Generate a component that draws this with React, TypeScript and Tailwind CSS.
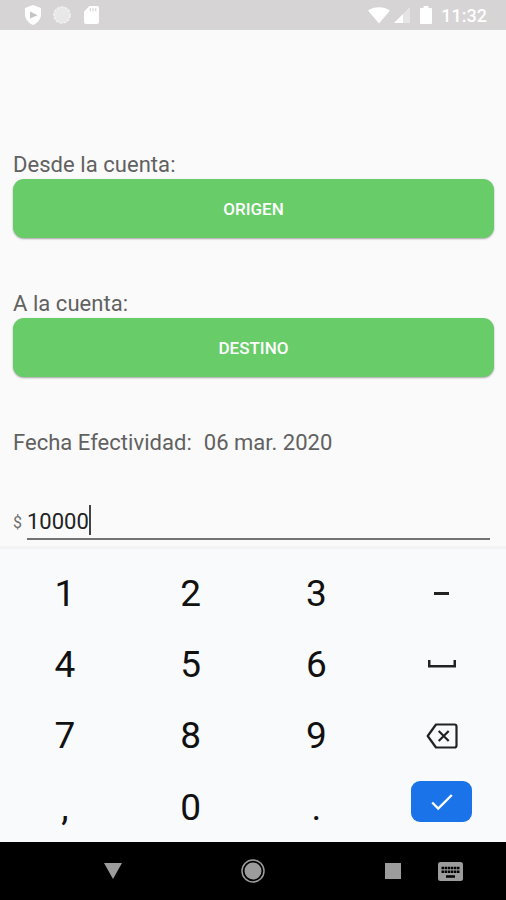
import { useState } from "react";

const rows = [
  ["1", "2", "3", "-"],
  ["4", "5", "6", "space"],
  ["7", "8", "9", "del"],
  [",", "0", ".", "ok"],
];

function StatusBar() {
  return (
    <div className="flex h-[30px] shrink-0 items-center justify-between bg-[#d6d4d5] pr-[19px] pl-6 text-white">
      <div className="flex items-center">
        <svg width="18" height="20" viewBox="0 0 18 20">
          <path d="M9 0 17 3v6.500c0 4.600-3.500 8.600-8 10.500-4.500-1.900-8-5.900-8-10.500V3z" fill="white" />
          <path d="m6 6.500 7.500 3.700L6 13.500z" fill="#c6c4c5" />
        </svg>
        <svg className="ml-[11px]" width="18" height="18" viewBox="0 0 18 18">
          <circle cx="9" cy="9" r="8" fill="#e9e8e8" stroke="#f3f2f2" strokeWidth="1.500" strokeDasharray="3 1" />
        </svg>
        <svg className="ml-[13px]" width="16" height="20" viewBox="0 0 16 20">
          <path d="M5.500 1H13a2 2 0 0 1 2 2v14a2 2 0 0 1-2 2H2a2 2 0 0 1-2-2V6.500z" fill="white" />
          <path d="M6.300 3.300v3M9 3.300v3M11.700 3.300v3" stroke="#d6d4d5" strokeWidth="1.200" />
        </svg>
      </div>
      <div className="flex items-center">
        <svg width="22" height="18" viewBox="0 0 22 18">
          <path d="M0 4.500C6 0 16 0 22 4.500L11 17.500z" fill="white" />
        </svg>
        <svg className="ml-[3px]" width="18" height="18" viewBox="0 0 18 18">
          <path d="M17 1v16H1z" fill="#e6e5e5" />
          <path d="M10 8v9H1z" fill="white" />
        </svg>
        <svg className="ml-[9px]" width="12" height="20" viewBox="0 0 12 20">
          <path d="M3.500 1h5v2H11a1 1 0 0 1 1 1v14a1 1 0 0 1-1 1H1a1 1 0 0 1-1-1V4a1 1 0 0 1 1-1h2.500z" fill="white" />
        </svg>
        <span className="ml-[9px] pt-px text-[18px] leading-[30px] font-medium">11:32</span>
      </div>
    </div>
  );
}

function KeyLabel({ value }: { value: string }) {
  if (value === "-") {
    return <span className="mb-px h-[3px] w-[15px] bg-[#222]" />;
  }
  if (value === "space") {
    return (
      <svg className="mb-[2px]" width="28" height="8" viewBox="0 0 28 8">
        <path d="M1.250 0v6.200h25.500V0" fill="none" stroke="#222" strokeWidth="2.500" />
      </svg>
    );
  }
  if (value === "del") {
    return (
      <svg width="32" height="26" viewBox="0 0 32 26" fill="none" stroke="#222" strokeWidth="2.200">
        <path d="M10 1.500h18.500a2 2 0 0 1 2 2v19a2 2 0 0 1-2 2H10L1.700 13z" strokeLinejoin="round" />
        <path d="m12.700 8 10 10M22.700 8l-10 10" />
      </svg>
    );
  }
  if (value === "ok") {
    return (
      <span className="mb-[11px] flex h-[41px] w-[61px] items-center justify-center rounded-[9px] bg-[#1a73e8]">
        <svg width="22" height="18" viewBox="0 0 22 18">
          <path d="m1.200 9.500 6 6L20.800 2" fill="none" stroke="white" strokeWidth="2.400" />
        </svg>
      </span>
    );
  }
  return <span className="pl-px text-[37px] leading-none">{value}</span>;
}

function AccountField({ label, button }: { label: string; button: string }) {
  return (
    <div>
      <p className="pt-px text-[22px] leading-[29px] tracking-[0.05px] text-[#616161]">{label}</p>
      <button className="block h-[59px] w-full rounded-[11px] bg-[#68cc68] pt-[3px] text-[17px] font-medium text-white shadow-[0_1px_2px_rgba(0,0,0,0.35)]">
        {button}
      </button>
    </div>
  );
}

export default function App() {
  const [amount, setAmount] = useState("10000");

  const press = (key: string) => {
    if (key === "del") return setAmount(amount.slice(0, -1));
    if (key === "ok" || key === "space") return;
    setAmount(amount + key);
  };

  return (
    <div className="flex h-[900px] w-[506px] flex-col overflow-hidden bg-[#fafafa] font-[Roboto,sans-serif]">
      <StatusBar />

      {/* FORM */}
      <div className="flex h-[516px] shrink-0 flex-col pt-[119px] pr-3 pl-[13px]">
        <div className="flex flex-col gap-[50px]">
          <AccountField label="Desde la cuenta:" button="ORIGEN" />
          <AccountField label="A la cuenta:" button="DESTINO" />
        </div>

        <div className="mt-[51px] flex gap-3 text-[22px] leading-[30px] tracking-[0.03px] text-[#616161]">
          <span>Fecha Efectividad:</span>
          <span>06 mar. 2020</span>
        </div>

        <div className="mt-[46px] flex">
          <span className="w-[14px] pt-px text-[16px] leading-[36px] text-[#707070]">$</span>
          <div className="mr-1 flex h-[36px] flex-1 items-center border-b-2 border-[#737373]">
            <span className="pt-[2px] text-[22px] leading-[34px] text-[#222]">{amount}</span>
            <span className="mb-[2px] h-[30px] w-[2px] bg-[#444]" />
          </div>
        </div>
      </div>

      {/* KEYPAD */}
      <div className="h-[296px] shrink-0 border-t-[3px] border-[#f2f3f3] bg-[#f8fafc] px-[1.500px] pt-[9px]">
        {rows.map((row, i) => (
          <div key={i} className="grid h-[71.200px] grid-cols-4">
            {row.map((key) => (
              <button
                key={key}
                onClick={() => press(key)}
                className="flex items-center justify-center text-[#111]"
              >
                <KeyLabel value={key} />
              </button>
            ))}
          </div>
        ))}
      </div>

      {/* NAV BAR */}
      <div className="flex h-[58px] shrink-0 items-center bg-black pl-[104px]">
        <svg width="18" height="16" viewBox="0 0 18 16">
          <path d="M0 0h18L9 16z" fill="#9c9c9c" />
        </svg>
        <svg className="ml-[119px]" width="24" height="24" viewBox="0 0 24 24">
          <circle cx="12" cy="12" r="11" fill="none" stroke="#9c9c9c" strokeWidth="1.500" />
          <circle cx="12" cy="12" r="8.500" fill="#9c9c9c" />
        </svg>
        <span className="ml-[120px] h-4 w-4 bg-[#9c9c9c]" />
        <svg className="ml-[37px]" width="25" height="19" viewBox="0 0 25 19">
          <rect width="25" height="19" rx="2.500" fill="#9c9c9c" />
          <path d="M3.500 6h18M3.500 9.700h18" stroke="black" strokeWidth="2.500" strokeDasharray="2.500 0.600" />
          <path d="M8 14.500h9" stroke="black" strokeWidth="2.500" />
        </svg>
      </div>
    </div>
  );
}
